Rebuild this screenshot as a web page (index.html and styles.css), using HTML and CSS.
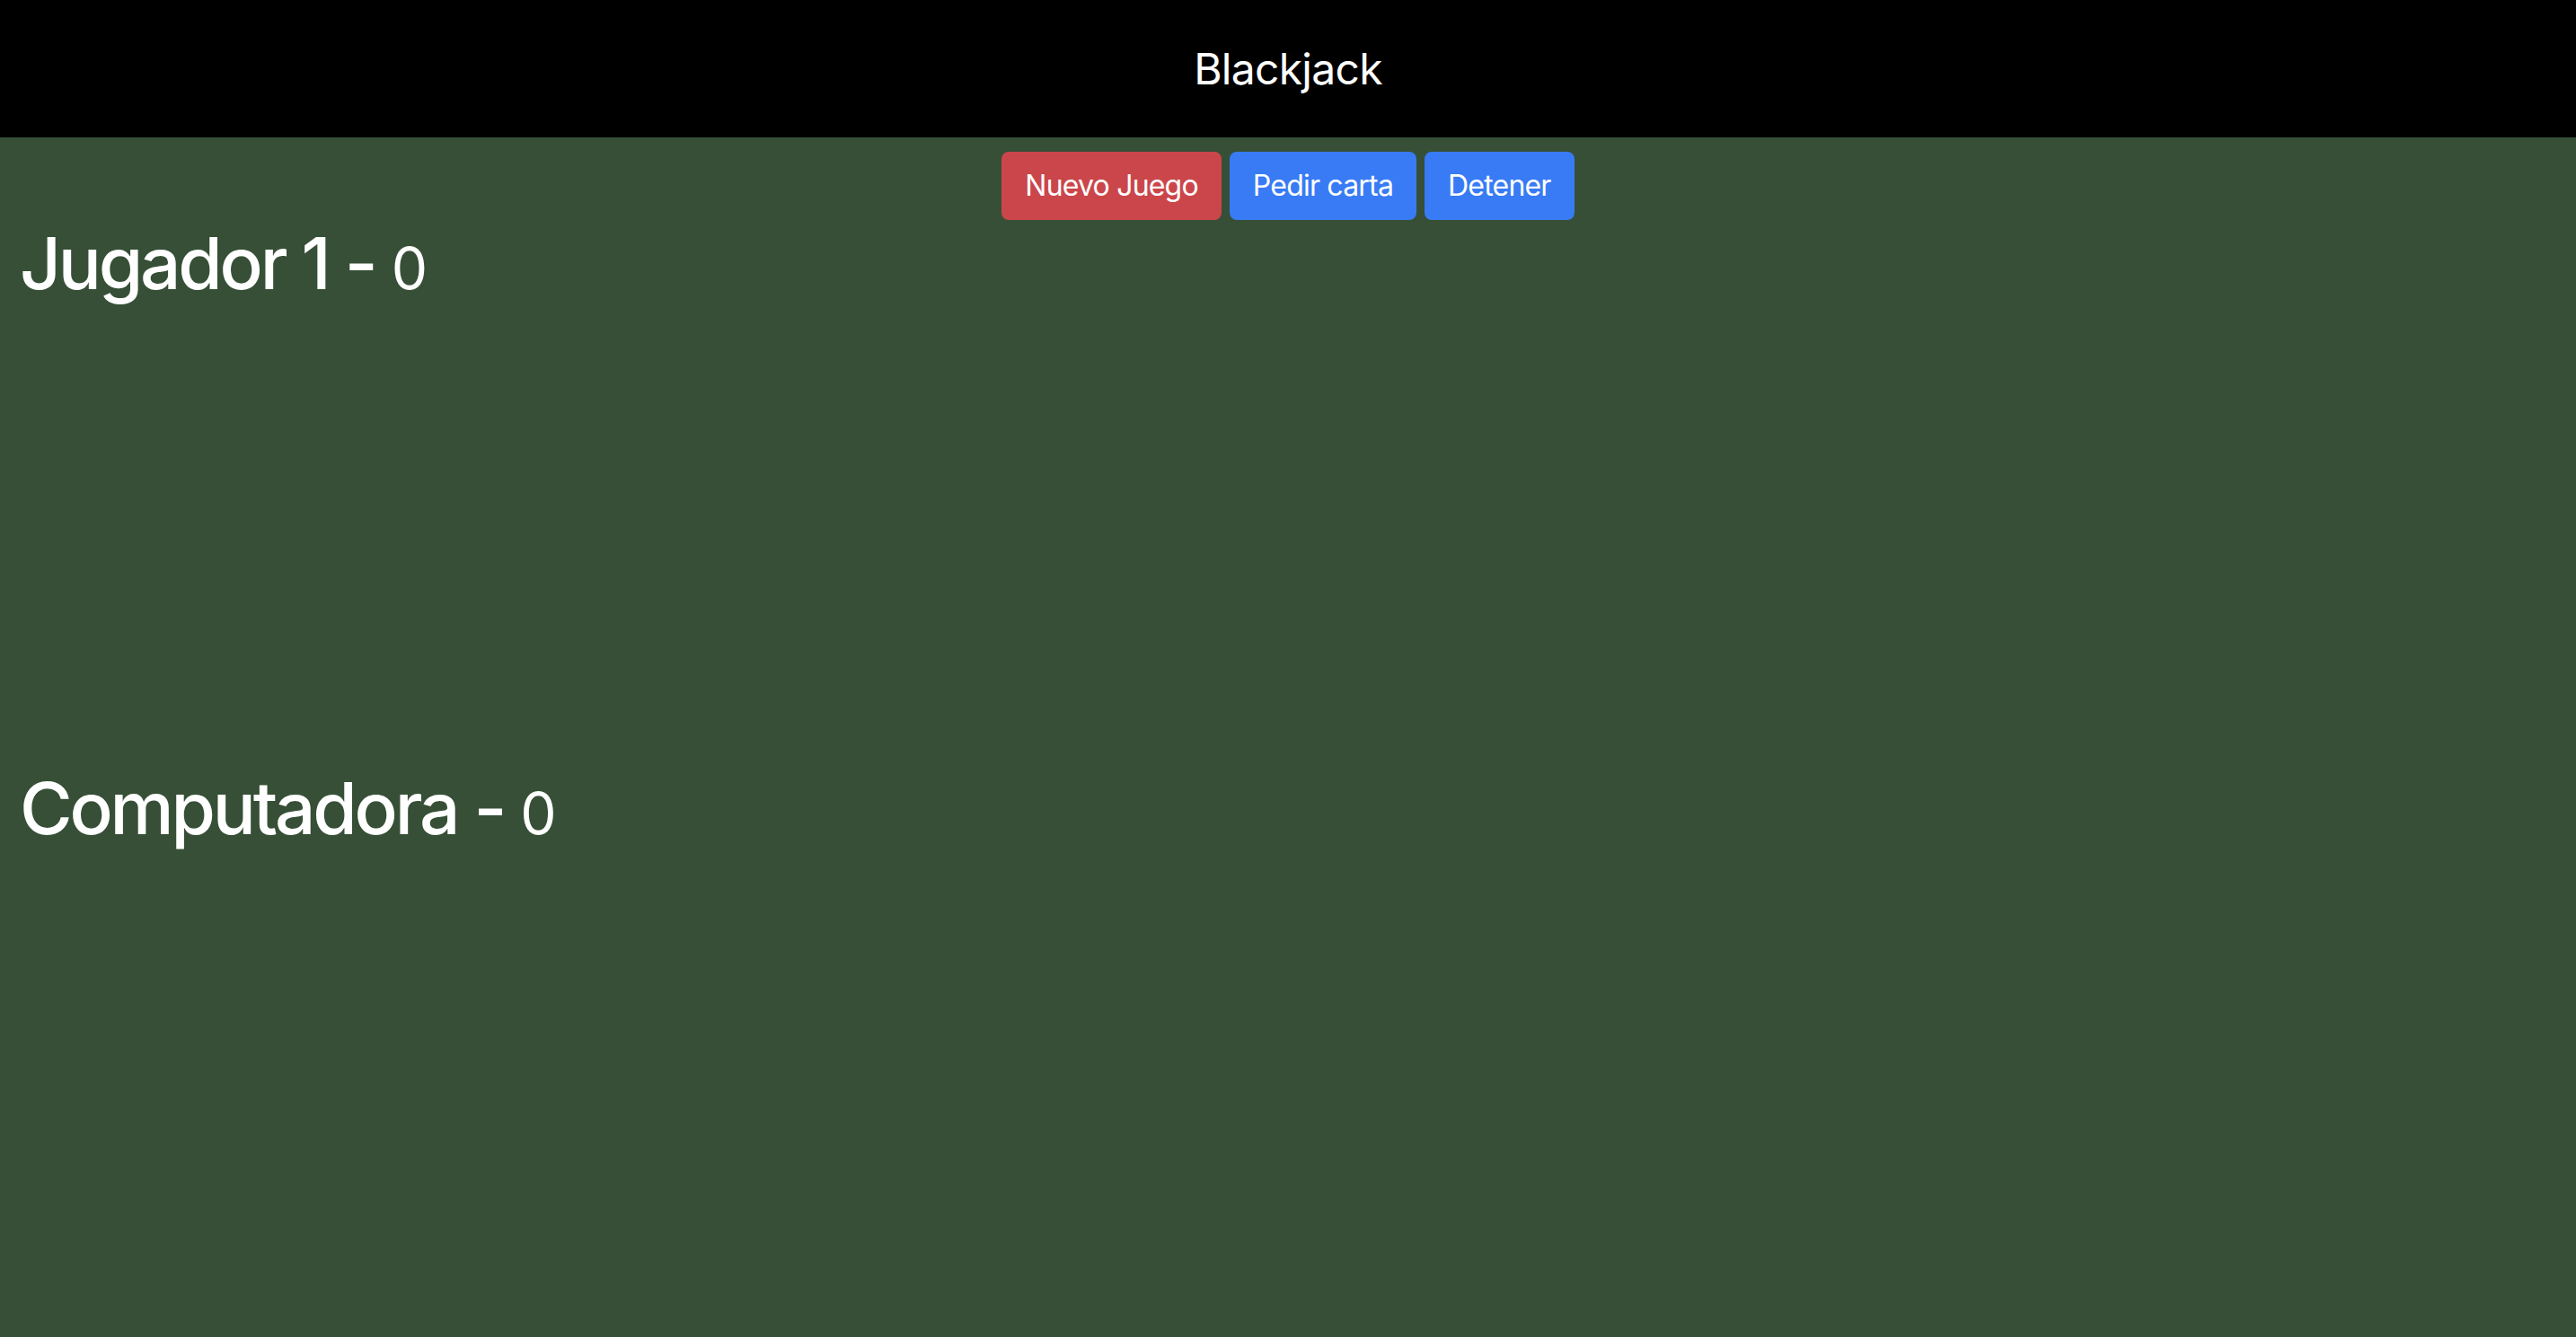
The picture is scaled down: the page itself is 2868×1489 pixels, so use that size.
FILE: index.html
```html
<!DOCTYPE html>
<html lang="es">
<head>
<meta charset="utf-8">
<title>Blackjack</title>
<link rel="stylesheet" href="styles.css">
</head>
<body>
<header class="topbar">
  <h2 class="title">Blackjack</h2>
</header>
<main class="table">
  <div class="controls">
    <button class="btn btn-danger">Nuevo Juego</button>
    <button class="btn btn-primary">Pedir carta</button>
    <button class="btn btn-primary">Detener</button>
  </div>
  <section class="player">
    <h1 class="player-name">Jugador 1 - <small class="score">0</small></h1>
    <div class="cards"></div>
  </section>
  <section class="player">
    <h1 class="player-name">Computadora - <small class="score">0</small></h1>
    <div class="cards"></div>
  </section>
</main>
</body>
</html>
```

FILE: styles.css
```css
html, body {
  margin: 0;
  padding: 0;
}
body {
  font-family: Inter, "Noto Sans", "Liberation Sans", sans-serif;
  background: #364f36;
  color: #fff;
  min-height: 1489px;
}
.topbar {
  background: #000;
  height: 153px;
  display: flex;
  align-items: center;
  justify-content: center;
}
.title {
  margin: 0;
  font-size: 48px;
  font-weight: 400;
  line-height: 1.2;
  letter-spacing: -0.015em;
  color: #fff;
}
.table {
  padding: 0 22px;
}
.controls {
  display: flex;
  justify-content: center;
  gap: 9px;
  padding-top: 16px;
}
.btn {
  font-family: inherit;
  font-size: 32px;
  line-height: 48px;
  padding: 12px 24px;
  border: 2px solid transparent;
  border-radius: 8px;
  letter-spacing: -0.025em;
  color: #fff;
  cursor: pointer;
}
.btn-danger {
  background: #cb464b;
  border-color: #cb464b;
}
.btn-primary {
  background: #387bf5;
  border-color: #387bf5;
}
.player-name {
  margin: 0 0 16px 0;
  font-size: 80px;
  font-weight: 500;
  line-height: 1.2;
  letter-spacing: -0.04em;
}
.score {
  font-size: 80%;
  font-weight: 400;
  letter-spacing: 0;
}
.cards {
  height: 495px;
}
```
